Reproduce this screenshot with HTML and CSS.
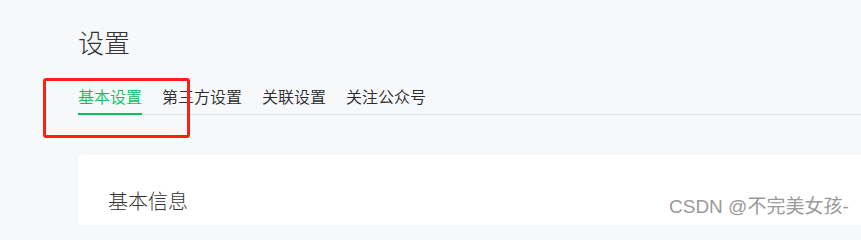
FILE: index.html
```html
<!DOCTYPE html>
<html lang="zh-CN">
<head>
<meta charset="utf-8">
<title>设置</title>
<link rel="stylesheet" href="styles.css">
</head>
<body>
<div class="page">
  <h1 class="title">设置</h1>
  <div class="tabs">
    <div class="tab active">基本设置</div>
    <div class="tab">第三方设置</div>
    <div class="tab">关联设置</div>
    <div class="tab">关注公众号</div>
  </div>
  <div class="card">
    <h2 class="card-title">基本信息</h2>
  </div>
</div>
<div class="mark-box"></div>
<div class="watermark">CSDN @不完美女孩-</div>
</body>
</html>
```
FILE: styles.css
```css
html, body {
  margin: 0;
  padding: 0;
  background: #f7f8fa;
  overflow: hidden;
  height: 225px;
}
body {
  font-family: "Noto Sans CJK SC", "Liberation Sans", sans-serif;
  color: #333;
  position: relative;
}
.page {
  padding: 24px 0 0 78px;
  height: 201px;
  overflow: hidden;
}
.title {
  margin: 0;
  font-size: 26px;
  line-height: 36px;
  font-weight: 300;
  color: #333;
}
.tabs {
  margin-top: 25px;
  display: flex;
  gap: 20px;
  border-bottom: 1px solid #e2e4e8;
}
.tab {
  font-size: 16px;
  line-height: 22px;
  font-weight: 350;
  padding-bottom: 6px;
  border-bottom: 2px solid transparent;
  margin-bottom: -1px;
  color: #2b2b2b;
}
.tab.active {
  color: #07c160;
  border-bottom-color: #07c160;
}
.card {
  margin-top: 40px;
  background: #fff;
  border-radius: 4px 0 0 0;
  padding: 32px 30px 10px;
}
.card-title {
  margin: 0;
  font-size: 20px;
  line-height: 28px;
  font-weight: 300;
  color: #333;
}
.mark-box {
  position: absolute;
  left: 43px;
  top: 78px;
  width: 141px;
  height: 54px;
  border: 3px solid #fb1f14;
  border-radius: 3px;
}
.watermark {
  position: absolute;
  left: 669px;
  top: 195px;
  font-family: "Liberation Sans", "Noto Sans CJK SC", sans-serif;
  font-size: 19px;
  line-height: 24px;
  color: #9a9a9a;
  text-shadow: 0 0 1px #fff, 1px 1px 0 #fff;
  white-space: nowrap;
}
```
